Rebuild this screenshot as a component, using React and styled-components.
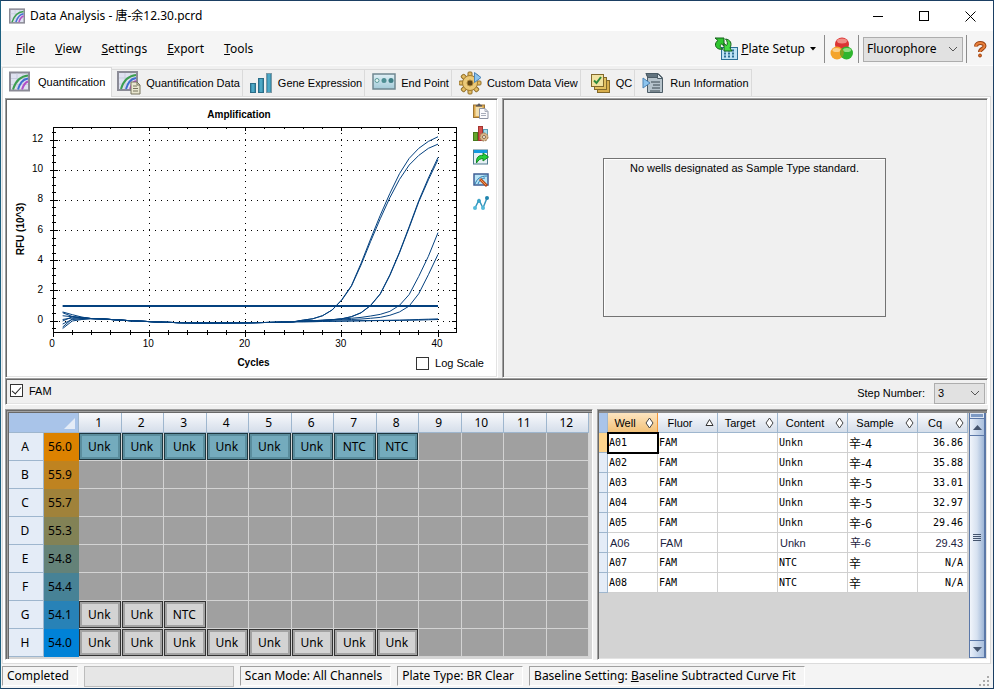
import React, { useState } from "react";
import styled, { createGlobalStyle, css } from "styled-components";

const UI = '"Noto Sans", "Noto Sans CJK SC", sans-serif';
const SMALL = '"Liberation Sans", "Noto Sans CJK SC", sans-serif';
const MONO = '"DejaVu Sans Mono", "Noto Sans CJK SC", monospace';

const GlobalStyle = createGlobalStyle`
  *, *::before, *::after { box-sizing: border-box; }
  body { margin: 0; background: #f0f0f0; color: #000; font: 12px/16px ${UI}; }
  button, select, input { font: inherit; color: inherit; margin: 0; }
  button { border: 0; padding: 0; background: none; }
  svg { display: block; flex: none; }
`;

/* ---------- window frame ---------- */

const Window = styled.div`
  display: flex;
  flex-direction: column;
  min-height: 100vh;
  background: #f0f0f0;
  border: 1px solid #1b3f63;
  border-left-color: #1d6080;
`;

const TitleBar = styled.header`
  display: flex;
  align-items: center;
  height: 30px;
  padding-left: 8px;
  background: #fff;
`;

const Title = styled.h1`
  flex: 1;
  margin: 0 0 0 5px;
  font-size: 12px;
  font-weight: 400;
`;

const WindowButton = styled.button`
  display: grid;
  place-items: center;
  width: 46px;
  height: 29px;
`;

const MenuBar = styled.nav`
  display: flex;
  align-items: center;
  height: 35px;
  padding: 2px 6px 0 5px;
  background: #f5f5f5;
  border-bottom: 1px solid #fbfbfb;
`;

const MenuItem = styled.button`
  padding: 0 10px;
`;

const Spacer = styled.div`
  flex: 1;
`;

const ToolButton = styled.button`
  display: flex;
  align-items: center;
  gap: ${(p) => p.$gap || 0}px;
`;

const Divider = styled.span`
  width: 1px;
  height: 28px;
  margin: 0 ${(p) => p.$after || 5}px 0 ${(p) => p.$before || 5}px;
  background: #8c8c8c;
`;

const SelectWrap = styled.span`
  display: inline-grid;
  grid-template-columns: 1fr 18px;
  align-items: center;
  width: ${(p) => p.$width}px;
  height: ${(p) => p.$height}px;
  border: 1px solid #adadad;
  background: #e1e1e1;
  font-family: ${(p) => (p.$small ? SMALL : UI)};
  font-size: ${(p) => (p.$small ? 11 : 12)}px;

  select {
    grid-area: 1 / 1 / 2 / 3;
    width: 100%;
    height: 100%;
    padding: 0 0 0 3px;
    border: 0;
    background: none;
    appearance: none;
  }
  svg {
    grid-area: 1 / 2;
    justify-self: center;
    pointer-events: none;
  }
`;

/* ---------- tabs ---------- */

const TabStrip = styled.div`
  display: flex;
  align-items: flex-end;
  height: 30px;
  padding-left: 1px;
  font: 11px/14px ${SMALL};
`;

const Tab = styled.button`
  display: flex;
  align-items: center;
  gap: 5px;
  height: 27px;
  padding: 0 2px 0 ${(p) => p.$lead}px;
  border: 1px solid #dadada;
  border-width: 1px 1px 0 0;
  background: #f0f0f0;
  white-space: nowrap;

  ${(p) =>
    p.$active &&
    css`
      z-index: 1;
      height: 30px;
      margin-bottom: -1px;
      padding: 0 6px 2px 6px;
      gap: 8px;
      background: #fff;
      border-left-width: 1px;
    `}
`;

const TabPage = styled.main`
  display: flex;
  flex: 1;
  flex-direction: column;
  margin: 0 2px 0 1px;
  padding: 1px 2px 3px;
  border: 1px solid #dcdcdc;
  background: #fff;
`;

const Workspace = styled.div`
  display: flex;
  flex: 1;
  flex-direction: column;
  background: #f0f0f0;
`;

const Split = styled.div`
  display: grid;
  grid-template-columns: ${(p) => p.$columns};
  gap: 4px;
  flex: 1 0 ${(p) => p.$height}px;
`;

const Panel = styled.section`
  min-width: 0;
  padding: 1px;
  border: 1px solid;
  border-color: #a0a0a0 #fff #fff #a0a0a0;
  box-shadow: inset 1px 1px #696969, inset -1px -1px #e3e3e3;
  background: ${(p) => p.$background || "#f0f0f0"};
`;

/* ---------- chart panel ---------- */

const ChartPanel = styled(Panel)`
  display: flex;
  flex-direction: column;
`;

const ChartBody = styled.div`
  display: flex;
  flex: 1;
  min-height: 0;

  > svg {
    flex: 1;
    min-width: 0;
    height: 100%;
  }
`;

const ChartTools = styled.div`
  display: flex;
  flex-direction: column;
  gap: 7px;
  width: 23px;
  padding-top: 3px;
`;

const ChartTool = styled.button`
  width: 16px;
  height: 16px;
`;

const ChartFooter = styled.div`
  display: grid;
  grid-template-columns: 1fr auto 1fr;
  align-items: center;
  height: 22px;
  padding: 0 12px 4px 16px;
  font: 11px/14px ${SMALL};
`;

const AxisTitle = styled.span`
  grid-column: 2;
  font-size: 10px;
  font-weight: 700;
`;

const CheckLabel = styled.label`
  display: flex;
  align-items: center;
  justify-self: end;
  gap: 6px;
  font: 11px/14px ${SMALL};
`;

const CheckBox = styled.input`
  appearance: none;
  display: grid;
  place-items: center;
  width: 13px;
  height: 13px;
  border: 1px solid #333;
  background: #fff;

  &:checked::after {
    content: "";
    width: 9px;
    height: 5px;
    margin-bottom: 3px;
    border: solid #222;
    border-width: 0 0 1px 1px;
    transform: rotate(-48deg);
  }
`;

const StandardPanel = styled(Panel)`
  display: grid;
  padding: 59px 101px 60px 100px;
`;

const EmptyBox = styled.p`
  margin: 0;
  padding: 2px;
  border: 1px solid #737373;
  box-shadow: inset 1px 1px #fff;
  text-align: center;
  font: 11px/14px ${SMALL};
`;

/* ---------- fluorophore bar ---------- */

const FluorBar = styled(Panel)`
  display: flex;
  align-items: center;
  height: 27px;
  margin-bottom: 4px;
  padding: 0 2px 2px 4px;
  font: 11px/14px ${SMALL};
`;

const StepLabel = styled.label`
  display: flex;
  align-items: center;
  gap: 9px;
  margin-left: auto;
  padding-top: 5px;
`;

/* ---------- plate ---------- */

const PlatePanel = styled(Panel)`
  padding: 3px 3px 2px 3px;
  background: #d6d6d6;
  box-shadow: inset 1px 1px #696969, inset 2px 2px #a0a0a0, inset 3px 3px #696969;
`;

const PlateTable = styled.table`
  width: 100%;
  height: 100%;
  table-layout: fixed;
  border-spacing: 0;
  text-align: center;
  line-height: 16px;
`;

const PlateHead = styled.th`
  height: 20px;
  padding: 0 2px 0 0;
  border-right: 1px solid #9eb6ce;
  border-bottom: 1px solid #9eb6ce;
  background: linear-gradient(#f8f9fc, #d5deea);
  font-weight: 400;
`;

const PlateCorner = styled(PlateHead)`
  padding: 0;
  background: #a9c4e9;

  svg {
    margin: 3px 3px 1px auto;
  }
`;

const RowHead = styled.th`
  padding: 0 2px 0 0;
  border-right: 1px solid #9eb6ce;
  border-bottom: 1px solid #9eb6ce;
  background: #e4ecf7;
  font-weight: 400;
`;

const TempCell = styled.td`
  padding: 0 3px 0 0;
  background: ${(p) => p.$color};
`;

const Well = styled.td`
  height: 27px;
  padding: 0 1px 0 0;
  border-right: 1px solid #d3d3d3;
  border-bottom: 1px solid #d3d3d3;
  background: #a0a0a0;

  ${(p) =>
    p.$kind === "loaded" &&
    css`
      background: #74abbd;
      box-shadow: inset 0 0 0 1px #1d3740, inset 0 0 0 3px #5b8e9e;
    `}
  ${(p) =>
    p.$kind === "idle" &&
    css`
      background: #d3d3d3;
      box-shadow: inset 0 0 0 1px #333, inset 0 0 0 3px #a3a3a3;
    `}
`;

/* ---------- results table ---------- */

const ResultsPanel = styled(Panel)`
  display: grid;
  grid-template-columns: minmax(0, 1fr) 17px;
  align-items: start;
  gap: 1px;
  padding-top: 3px;
  background: #d3d3d3;
  box-shadow: inset 1px 1px #696969, inset 0 3px #8a8a8a, inset -1px -1px #e3e3e3;
`;

const ResultsTable = styled.table`
  width: 100%;
  table-layout: fixed;
  border-spacing: 0;
`;

const ResultHead = styled.th`
  height: 20px;
  padding: 0;
  border-right: 1px solid #9eb6ce;
  border-bottom: 1px solid #9eb6ce;
  background: linear-gradient(#f8f9fc, #d5deea);
  font: 11px/14px ${SMALL};

  ${(p) =>
    p.$selected &&
    css`
      border-color: #f29536;
      background: linear-gradient(#fde5c0, #f3c27a);
    `}
  ${(p) =>
    p.$corner &&
    css`
      background: #a9c4e9;
    `}
`;

const SortButton = styled.button`
  display: flex;
  align-items: center;
  justify-content: space-between;
  width: 100%;
  padding: 0 3px 0 0;

  span {
    flex: 1;
    padding-right: 3px;
    text-align: center;
  }
`;

const RowMarker = styled.th`
  padding: 0;
  border-right: 1px solid #9eb6ce;
  border-bottom: 1px solid #9eb6ce;
  background: ${(p) => (p.$selected ? "#ffd58d" : "#e4ecf7")};
`;

const Cell = styled.td`
  height: 20px;
  padding: 0 4px 0 1px;
  border-right: 1px solid #d0d0d0;
  border-bottom: 1px solid #d0d0d0;
  background: #fff;
  font: 10px/14px ${MONO};
  text-align: ${(p) => (p.$right ? "right" : "left")};
  white-space: nowrap;

  ${(p) =>
    p.$cjk &&
    css`
      font: 12px/14px "Noto Sans CJK SC", sans-serif;
    `}
  ${(p) =>
    p.$current &&
    css`
      padding-left: 2px;
      color: #1c2340;
      font-family: ${SMALL};
      font-size: 11px;
    `}
  ${(p) =>
    p.$selected &&
    css`
      outline: 2px solid #000;
      outline-offset: -1px;
    `}
`;

const ScrollBar = styled.div`
  display: flex;
  flex-direction: column;
  align-self: stretch;
  border: solid #5b78a8;
  border-width: 0 2px 1px 1px;
  background: #5b78a8;
  gap: 1px;
`;

const ScrollSplit = styled.div`
  height: 5px;
  border: 1px solid #dce6f4;
  background: #7d9ac4;
`;

const ScrollButton = styled.button`
  display: grid;
  place-items: center;
  height: 16px;
  background: linear-gradient(90deg, #e9f0fa, #a9bfdd);
`;

const ScrollThumb = styled.div`
  display: grid;
  flex: 1;
  place-items: center;
  background: linear-gradient(90deg, #f1f5fb, #d6e1f0 50%, #9db5d6);
`;

/* ---------- status bar ---------- */

const StatusBar = styled.footer`
  display: flex;
  align-items: stretch;
  gap: 6px;
  height: 24px;
  padding: 2px 2px 1px 1px;
  background: #f4f4f4;
`;

const StatusCell = styled.div`
  padding: 1px 8px 0 4px;
  margin-bottom: 1px;
  border: 1px solid;
  border-color: #a0a0a0 #fff #fff #a0a0a0;
  white-space: nowrap;
`;

const ProgressTrack = styled.div`
  width: 150px;
  border: 1px solid #bcbcbc;
  background: #e6e6e6;
`;

const Grip = styled.svg`
  align-self: flex-end;
  margin-left: auto;
`;

/* ---------- icons ---------- */

const AmpShape = () => (
  <>
    <rect x="1" y="1" width="19" height="18" fill="#dfe2f0" stroke="#8b8b96" strokeWidth="2" />
    <path d="M2 7H19M2 13H19M8 2V18M14 2V18" stroke="#c9cde0" />
    <path d="M4 18C6 11 10 5 19 4" fill="none" stroke="#3c9e50" strokeWidth="2" />
    <path d="M9 18C11 12 13 8 19 7" fill="none" stroke="#3f6fd0" strokeWidth="2" />
    <path d="M13 18C14 15 16 11 19 10" fill="none" stroke="#b24fc8" strokeWidth="2" />
  </>
);

const AmpIcon = ({ size = 21 }) => (
  <svg width={size} height={size} viewBox="0 0 21 20" aria-hidden="true">
    <AmpShape />
  </svg>
);

const AmpDataIcon = () => (
  <svg width="24" height="24" viewBox="0 0 24 24" aria-hidden="true">
    <AmpShape />
    <path d="M14 11h6l3 3v9h-9z" fill="#e9e6cf" stroke="#77755f" />
    <path d="M20 11v3h3M16 15h4M16 17.5h5M16 20h5" fill="none" stroke="#77755f" />
  </svg>
);

const BarsIcon = () => (
  <svg width="23" height="22" viewBox="0 0 23 22" aria-hidden="true">
    <defs>
      <linearGradient id="bars" x2="1">
        <stop stopColor="#2d7fa3" />
        <stop offset=".5" stopColor="#56b3cf" />
        <stop offset="1" stopColor="#2c7896" />
      </linearGradient>
    </defs>
    <rect x=".5" y="11.5" width="5" height="9" fill="url(#bars)" stroke="#2a6d88" />
    <rect x="8.5" y="6.5" width="5" height="14" fill="url(#bars)" stroke="#2a6d88" />
    <rect x="16.5" y="1.5" width="5" height="19" fill="url(#bars)" stroke="#7c99a5" />
  </svg>
);

const EndPointIcon = () => (
  <svg width="24" height="20" viewBox="0 0 24 20" aria-hidden="true">
    <defs>
      <linearGradient id="ep" x2="0" y2="1">
        <stop stopColor="#dff0f6" />
        <stop offset="1" stopColor="#a3cad8" />
      </linearGradient>
    </defs>
    <rect x="1" y="1" width="22" height="15" fill="url(#ep)" stroke="#6f8790" strokeWidth="1.5" />
    <circle cx="5" cy="7.5" r="2" fill="#e4f5f5" stroke="#5c9a99" />
    <circle cx="12" cy="7.5" r="2.5" fill="#4f8f94" />
    <circle cx="19" cy="7.5" r="2.5" fill="#3f7f86" />
  </svg>
);

const teeth = [0, 45, 90, 135, 180, 225, 270, 315];
const GearIcon = () => (
  <svg width="23" height="24" viewBox="0 0 23 24" aria-hidden="true">
    {teeth.map((a) => (
      <rect key={a} x="9" y="1" width="4" height="6" rx="1" fill="#e3bb62" stroke="#8f6d27" transform={`rotate(${a} 11 12)`} />
    ))}
    <circle cx="11" cy="12" r="7.5" fill="#e7c16c" stroke="#a07c32" />
    <circle cx="11" cy="12" r="6.5" fill="#ebc978" />
    <circle cx="11" cy="12" r="3" fill="#5f4516" stroke="#b18a3d" />
    <path d="M15.5 1.5V11.5L22 6.5Z" fill="#8cc4ee" stroke="#4d84b5" />
  </svg>
);

const QcIcon = () => (
  <svg width="21" height="21" viewBox="0 0 21 21" aria-hidden="true">
    <rect x="7.5" y="7.5" width="12" height="12" fill="#d8ae4c" stroke="#82692b" />
    <rect x="4.5" y="4.5" width="12" height="12" fill="#e3c060" stroke="#82692b" />
    <rect x="1.5" y="1.5" width="12" height="12" fill="#f1e2a0" stroke="#82692b" />
    <path d="M4 7.5L6.5 10L11 4" fill="none" stroke="#2f8a3c" strokeWidth="2" />
  </svg>
);

const RunInfoIcon = () => (
  <svg width="23" height="22" viewBox="0 0 23 22" aria-hidden="true">
    <path d="M4 1.500H16L20.500 6V20.500H5.500V5Z" fill="#b6c3cb" stroke="#4c5c66" />
    <path d="M4 1.500H16L20 5.500H6Z" fill="#62747f" stroke="#4c5c66" />
    <path d="M15.500 1.500V6.500H20.500Z" fill="#dce5ea" stroke="#4c5c66" />
    <path d="M9 10H18M11 13H18M10 16H18M8 19H18" stroke="#38464e" />
    <path d="M1 6V16L8 11Z" fill="#8cc4ee" stroke="#4d84b5" />
  </svg>
);

const PlateSetupIcon = () => (
  <svg width="25" height="24" viewBox="0 0 25 24" aria-hidden="true">
    <rect x="7.5" y="10.5" width="16" height="12" fill="#bfe3f5" stroke="#2b6f96" />
    <path d="M10 13.5H22M10 16.5H22M10 19.5H22" stroke="#2b6f96" strokeWidth="2" strokeDasharray="2 2" />
    <path d="M1 1H10V9L7.500 7C5.500 8 6 11 9 12C5 13 1 11 1.500 7C2 5 3 4 4 3.500Z" fill="#30c630" stroke="#15611b" />
    <path d="M18 14H10V6.500L12.500 8.500C14 7 13.500 4 11.500 2C16 2.500 18.500 6 16 11Z" fill="#45d944" stroke="#15611b" />
  </svg>
);

const BallsIcon = () => (
  <svg width="24" height="24" viewBox="0 0 24 24" aria-hidden="true">
    <circle cx="12" cy="7.5" r="7" fill="#dc3434" />
    <ellipse cx="12" cy="4" rx="5" ry="2.5" fill="#f08e86" />
    <circle cx="7" cy="16" r="6.5" fill="#f4a42c" />
    <ellipse cx="6.5" cy="13" rx="4" ry="2" fill="#fad08a" />
    <circle cx="16.5" cy="16" r="6.5" fill="#2eb52e" />
    <ellipse cx="17" cy="13" rx="4" ry="2" fill="#93dd84" />
    <path d="M12 11.5A6.500 6.500 0 0 1 12 20.5A6.500 6.500 0 0 1 12 11.5Z" fill="#84a01e" />
  </svg>
);

const HelpIcon = () => (
  <svg width="13" height="17" viewBox="0 0 13 17" aria-hidden="true">
    <path d="M2 5.500C2 1 10.500 1 10.500 5C10.500 8 6 7.500 6 11" fill="none" stroke="#9a4313" strokeWidth="4" />
    <path d="M2 5.500C2 1 10.500 1 10.500 5C10.500 8 6 7.500 6 11" fill="none" stroke="#e9803c" strokeWidth="2" />
    <circle cx="6" cy="14.5" r="1.5" fill="#e06a20" stroke="#9a4313" />
  </svg>
);

const Chevron = () => (
  <svg width="10" height="6" viewBox="0 0 10 6" aria-hidden="true">
    <path d="M1 1L5 5L9 1" fill="none" stroke="#555" />
  </svg>
);

const Diamond = () => (
  <svg width="9" height="12" viewBox="0 0 9 12" aria-hidden="true">
    <path d="M4.500 1L8 6L4.500 11L1 6Z" fill="#fff" stroke="#444" />
  </svg>
);

const SortUp = () => (
  <svg width="9" height="9" viewBox="0 0 9 9" aria-hidden="true">
    <path d="M4.500 1.500L8 7.500H1Z" fill="#fff" stroke="#333" />
  </svg>
);

const PasteIcon = () => (
  <svg width="16" height="16" viewBox="0 0 16 16" aria-hidden="true">
    <rect x=".5" y="2" width="11" height="12.5" fill="#dca94f" stroke="#9a7436" />
    <rect x="2.5" y="4" width="7" height="9" fill="#f2dfae" />
    <path d="M3 3.500V2H4.500C5 0 7 0 7.500 2H9V3.500Z" fill="#5b5b60" />
    <path d="M6.500 5.500H12L15 8.500V15.500H6.500Z" fill="#fbfbfd" stroke="#8d93a3" />
    <path d="M12 5.500V8.500H15M8 10.500H13M8 12.500H13" fill="none" stroke="#a9aebb" />
  </svg>
);

const ChartSettingsIcon = () => (
  <svg width="16" height="16" viewBox="0 0 16 16" aria-hidden="true">
    <rect x=".5" y="6.5" width="4" height="8" fill="#65a62b" stroke="#467a1b" />
    <rect x="5.5" y=".5" width="4" height="14" fill="#d3514c" stroke="#a33430" />
    <rect x="10.5" y="3.5" width="4" height="7" fill="#a8dcec" stroke="#5b9db3" />
    <circle cx="11" cy="11" r="4" fill="#d9b78b" stroke="#9a7a52" strokeDasharray="2 1" />
    <circle cx="11" cy="11" r="1.5" fill="#fff" stroke="#8a6a44" />
  </svg>
);

const ExportIcon = () => (
  <svg width="16" height="16" viewBox="0 0 16 16" aria-hidden="true">
    <rect x=".5" y="1" width="14" height="14" fill="#e6eff4" stroke="#517b8e" />
    <rect x="1" y="1" width="13" height="3" fill="#139ae0" />
    <path d="M3.500 14C3 8 6 6 10 6.500V4L15.500 8L10 12V9.500C7 9.500 5.500 11 3.500 14Z" fill="#25cf3a" stroke="#128a22" />
  </svg>
);

const EditChartIcon = () => (
  <svg width="16" height="16" viewBox="0 0 16 16" aria-hidden="true">
    <rect x="1" y="2" width="14" height="11" fill="#b9e4f6" stroke="#3f5f95" strokeWidth="1.5" />
    <path d="M2 12C4 7 7 4 14 4M5 12C6 9 9 6 12 6" fill="none" stroke="#287cae" />
    <path d="M7 7L14 14" stroke="#b8491c" strokeWidth="3" />
    <path d="M7.500 7.500L13 13" stroke="#f49a4e" />
  </svg>
);

const TraceIcon = () => (
  <svg width="16" height="16" viewBox="0 0 16 16" aria-hidden="true">
    <path d="M2 13L6 5L10 13L14 3" fill="none" stroke="#3596bd" strokeWidth="1.5" />
    <circle cx="2" cy="13" r="2" fill="#55bada" />
    <circle cx="6" cy="6" r="2" fill="#3aa3c8" />
    <circle cx="10" cy="13" r="2" fill="#55bada" />
    <circle cx="14" cy="3" r="2" fill="#2185ae" />
  </svg>
);

/* ---------- amplification chart ---------- */

const PLOT = { left: 46, right: 449, top: 27, bottom: 232, zero: 221 };
const px = (cycle) => PLOT.left + cycle * 9.625;
const py = (rfu) => PLOT.zero - rfu * 15.08;

/* shared baseline RFU for cycles 4-25 */
const baseline = [
  0.16, 0.14, 0.1, 0.06, 0.02, -0.01, -0.04, -0.07, -0.09, -0.11, -0.12, -0.13,
  -0.13, -0.13, -0.13, -0.12, -0.12, -0.11, -0.1, -0.09, -0.07, -0.05,
];

/* start: cycles 1-3, tail: cycles 26-40 */
const traces = [
  { start: [0.6, 0.42, 0.26], tail: [0.06, 0.15, 0.35, 0.73, 1.41, 2.34, 3.82, 5.44, 7.01, 8.46, 9.77, 10.78, 11.45, 11.91, 12.22] },
  { start: [0.35, 0.28, 0.22], tail: [0.06, 0.15, 0.35, 0.73, 1.38, 2.3, 3.71, 5.28, 6.78, 8.18, 9.39, 10.34, 10.98, 11.45, 11.73] },
  { start: [0.1, 0.2, 0.22], tail: [0, 0.02, 0.05, 0.09, 0.15, 0.29, 0.55, 1.04, 1.81, 3.07, 4.57, 6.25, 7.98, 9.48, 10.85] },
  { start: [-0.2, 0.1, 0.16], tail: [0, 0.01, 0.04, 0.08, 0.14, 0.28, 0.54, 1.02, 1.78, 3.02, 4.52, 6.18, 7.9, 9.36, 10.7] },
  { start: [-0.5, 0, 0.1], tail: [0, 0.02, 0.05, 0.09, 0.13, 0.18, 0.24, 0.33, 0.44, 0.64, 1.04, 1.75, 2.96, 4.29, 5.86] },
  { start: [0, 0.28, 0.24], tail: [0, 0.01, 0.03, 0.05, 0.08, 0.1, 0.13, 0.18, 0.24, 0.38, 0.6, 0.99, 1.81, 3.07, 4.42] },
  { start: [0.55, 0.3, 0.18], tail: [-0.04, -0.03, -0.02, -0.01, 0, 0.01, 0.02, 0.03, 0.04, 0.05, 0.06, 0.08, 0.1, 0.12, 0.14] },
  { start: [-0.4, 0.15, 0.12], tail: [-0.06, -0.05, -0.03, -0.02, -0.01, 0, 0.01, 0.02, 0.03, 0.03, 0.04, 0.05, 0.06, 0.08, 0.1] },
];

const range = (from, to, step) => {
  const out = [];
  for (let v = from; v <= to; v += step) out.push(v);
  return out;
};

function AmplificationChart() {
  const { left, right, top, bottom } = PLOT;
  return (
    <svg viewBox="0 0 466 254" fontFamily="Liberation Sans, sans-serif" fontSize="10" role="img" aria-label="Amplification">
      <text x="232" y="18" textAnchor="middle" fontWeight="700">Amplification</text>
      <text transform="translate(17 129) rotate(-90)" textAnchor="middle" fontWeight="700">RFU (10^3)</text>
      <g stroke="#000" shapeRendering="crispEdges">
        {range(0, 12, 2).map((v) => (
          <line key={v} x1={left} x2={right} y1={py(v)} y2={py(v)} strokeDasharray="1 5" />
        ))}
        {range(10, 40, 10).map((c) => (
          <line key={c} x1={px(c)} x2={px(c)} y1={top} y2={bottom} strokeDasharray="1 5" />
        ))}
        <rect x={left} y={top} width={right - left} height={bottom - top} fill="none" />
        {range(0, 40, 2).map((c) => {
          const major = c % 10 === 0;
          return (
            <path key={c} d={`M${px(c)} ${bottom - 2}V${bottom + (major ? 5 : 3)}M${px(c)} ${top}V${top + (major ? 4 : 2)}`} />
          );
        })}
        {range(-1, 25, 1).map((i) => {
          const major = i % 4 === 0;
          const y = py(i / 2);
          return <path key={i} d={`M${left - (major ? 3 : 1)} ${y}H${left + (major ? 5 : 3)}M${right} ${y}H${right - (major ? 4 : 2)}`} />;
        })}
      </g>
      {range(0, 12, 2).map((v) => (
        <text key={v} x="36" y={py(v) + 2} textAnchor="end">{v}</text>
      ))}
      {range(0, 40, 10).map((c) => (
        <text key={c} x={px(c) - 1} y="247" textAnchor="middle">{c}</text>
      ))}
      <g fill="none" stroke="#04417f">
        <line x1={px(1)} x2={px(40)} y1="206" y2="206" strokeWidth="2" />
        {traces.map((t, i) => (
          <polyline
            key={i}
            points={[...t.start, ...baseline, ...t.tail].map((v, c) => `${px(c + 1)},${py(v)}`).join(" ")}
          />
        ))}
      </g>
    </svg>
  );
}

/* ---------- data ---------- */

const menus = ["File", "View", "Settings", "Export", "Tools"];

const tabs = [
  { label: "Quantification", icon: <AmpIcon />, lead: 7 },
  { label: "Quantification Data", icon: <AmpDataIcon />, lead: 5 },
  { label: "Gene Expression", icon: <BarsIcon />, lead: 7 },
  { label: "End Point", icon: <EndPointIcon />, lead: 7 },
  { label: "Custom Data View", icon: <GearIcon />, lead: 7 },
  { label: "QC", icon: <QcIcon />, lead: 9 },
  { label: "Run Information", icon: <RunInfoIcon />, lead: 7 },
];

const chartTools = [
  ["Copy", PasteIcon],
  ["Chart settings", ChartSettingsIcon],
  ["Export", ExportIcon],
  ["Edit chart", EditChartIcon],
  ["Trace styles", TraceIcon],
];

const U = "Unk";
const N = "NTC";
const plateRows = [
  { row: "A", temp: "56.0", color: "#dc8200", kind: "loaded", wells: [U, U, U, U, U, U, N, N] },
  { row: "B", temp: "55.9", color: "#bf8320", wells: [] },
  { row: "C", temp: "55.7", color: "#a0823a", wells: [] },
  { row: "D", temp: "55.3", color: "#828256", wells: [] },
  { row: "E", temp: "54.8", color: "#648278", wells: [] },
  { row: "F", temp: "54.4", color: "#478296", wells: [] },
  { row: "G", temp: "54.1", color: "#2882b7", kind: "idle", wells: [U, U, N] },
  { row: "H", temp: "54.0", color: "#0082d7", kind: "idle", wells: [U, U, U, U, U, U, U, U] },
];

const columns = [
  { label: "Well", width: 50 },
  { label: "Fluor", width: 60 },
  { label: "Target", width: 60 },
  { label: "Content", width: 70 },
  { label: "Sample", width: 70 },
  { label: "Cq", width: 50 },
];

const results = [
  ["A01", "FAM", "", "Unkn", "辛-4", "36.86"],
  ["A02", "FAM", "", "Unkn", "辛-4", "35.88"],
  ["A03", "FAM", "", "Unkn", "辛-5", "33.01"],
  ["A04", "FAM", "", "Unkn", "辛-5", "32.97"],
  ["A05", "FAM", "", "Unkn", "辛-6", "29.46"],
  ["A06", "FAM", "", "Unkn", "辛-6", "29.43"],
  ["A07", "FAM", "", "NTC", "辛", "N/A"],
  ["A08", "FAM", "", "NTC", "辛", "N/A"],
];

/* ---------- sections ---------- */

const Mnemonic = ({ text }) => (
  <span>
    <u>{text[0]}</u>
    {text.slice(1)}
  </span>
);

function Plate() {
  return (
    <PlatePanel aria-label="Plate">
      <PlateTable>
        <colgroup>
          <col width="35" />
          <col width="35" />
          {range(1, 12, 1).map((n) => <col key={n} />)}
        </colgroup>
        <thead>
          <tr>
            <PlateCorner colSpan={2}>
              <svg width="11" height="11" viewBox="0 0 11 11" aria-hidden="true">
                <path d="M11 0V11H0Z" fill="#e4ecf7" />
              </svg>
            </PlateCorner>
            {range(1, 12, 1).map((n) => <PlateHead key={n}>{n}</PlateHead>)}
          </tr>
        </thead>
        <tbody>
          {plateRows.map((r) => (
            <tr key={r.row}>
              <RowHead>{r.row}</RowHead>
              <TempCell $color={r.color}>{r.temp}</TempCell>
              {range(0, 11, 1).map((i) => (
                <Well key={i} $kind={r.wells[i] && r.kind}>{r.wells[i]}</Well>
              ))}
            </tr>
          ))}
        </tbody>
      </PlateTable>
    </PlatePanel>
  );
}

function Results() {
  return (
    <ResultsPanel aria-label="Results">
      <ResultsTable>
        <colgroup>
          <col width="9" />
          {columns.map((c) => <col key={c.label} width={c.width} />)}
        </colgroup>
        <thead>
          <tr>
            <ResultHead $corner />
            {columns.map((c, i) => (
              <ResultHead key={c.label} $selected={i === 0}>
                <SortButton>
                  <span>{c.label}</span>
                  {c.label === "Fluor" ? <SortUp /> : <Diamond />}
                </SortButton>
              </ResultHead>
            ))}
          </tr>
        </thead>
        <tbody>
          {results.map((r, y) => (
            <tr key={r[0]}>
              <RowMarker $selected={y === 0} />
              {r.map((value, x) => (
                <Cell key={x} $right={x === 5} $cjk={x === 4} $current={y === 5} $selected={y === 0 && x === 0}>
                  {value}
                </Cell>
              ))}
            </tr>
          ))}
        </tbody>
      </ResultsTable>
      <ScrollBar>
        <ScrollSplit />
        <ScrollButton aria-label="Scroll up">
          <svg width="9" height="5" viewBox="0 0 9 5"><path d="M0 5L4.500 0L9 5Z" fill="#44546e" /></svg>
        </ScrollButton>
        <ScrollThumb>
          <svg width="8" height="8" viewBox="0 0 8 8"><path d="M0 .5H8M0 2.500H8M0 4.500H8M0 6.500H8" stroke="#44546e" /></svg>
        </ScrollThumb>
        <ScrollButton aria-label="Scroll down">
          <svg width="9" height="5" viewBox="0 0 9 5"><path d="M0 0L4.500 5L9 0Z" fill="#44546e" /></svg>
        </ScrollButton>
      </ScrollBar>
    </ResultsPanel>
  );
}

export default function App() {
  const [active, setActive] = useState(0);
  return (
    <Window>
      <GlobalStyle />
      <TitleBar>
        <AmpIcon size={16} />
        <Title>Data Analysis - 唐-余12.30.pcrd</Title>
        <WindowButton aria-label="Minimize">
          <svg width="11" height="11"><path d="M0 5.500H10" stroke="#000" /></svg>
        </WindowButton>
        <WindowButton aria-label="Maximize">
          <svg width="11" height="11"><rect x=".5" y=".5" width="9" height="9" fill="none" stroke="#000" /></svg>
        </WindowButton>
        <WindowButton aria-label="Close">
          <svg width="11" height="11"><path d="M.5 .5L10.500 10.500M10.500 .5L.5 10.500" stroke="#000" /></svg>
        </WindowButton>
      </TitleBar>

      <MenuBar>
        {menus.map((m) => <MenuItem key={m}><Mnemonic text={m} /></MenuItem>)}
        <Spacer />
        <ToolButton $gap={2}>
          <PlateSetupIcon />
          <Mnemonic text="Plate Setup" />
          <svg width="12" height="4" viewBox="0 0 12 4"><path d="M3 0H9L6 3.500Z" /></svg>
        </ToolButton>
        <Divider />
        <ToolButton aria-label="Fluorophores"><BallsIcon /></ToolButton>
        <Divider $before={4} $after={4} />
        <SelectWrap $width={100} $height={25}>
          <select aria-label="View by"><option>Fluorophore</option></select>
          <Chevron />
        </SelectWrap>
        <Divider $before={3} $after={7} />
        <ToolButton aria-label="Help"><HelpIcon /></ToolButton>
      </MenuBar>

      <TabStrip role="tablist">
        {tabs.map((t, i) => (
          <Tab key={t.label} role="tab" aria-selected={i === active} $active={i === active} $lead={t.lead} onClick={() => setActive(i)}>
            {t.icon}
            {t.label}
          </Tab>
        ))}
      </TabStrip>

      <TabPage>
        <Workspace>
          <Split $columns="493fr 486fr" $height={280}>
            <ChartPanel $background="#fff">
              <ChartBody>
                <AmplificationChart />
                <ChartTools>
                  {chartTools.map(([label, Icon]) => (
                    <ChartTool key={label} aria-label={label}><Icon /></ChartTool>
                  ))}
                </ChartTools>
              </ChartBody>
              <ChartFooter>
                <AxisTitle>Cycles</AxisTitle>
                <CheckLabel><CheckBox type="checkbox" />Log Scale</CheckLabel>
              </ChartFooter>
            </ChartPanel>
            <StandardPanel>
              <EmptyBox>No wells designated as Sample Type standard.</EmptyBox>
            </StandardPanel>
          </Split>

          <FluorBar>
            <CheckLabel><CheckBox type="checkbox" defaultChecked />FAM</CheckLabel>
            <StepLabel>
              Step Number:
              <SelectWrap $width={51} $height={21} $small>
                <select><option>3</option></select>
                <Chevron />
              </SelectWrap>
            </StepLabel>
          </FluorBar>

          <Split $columns="588fr 391fr" $height={251}>
            <Plate />
            <Results />
          </Split>
        </Workspace>
      </TabPage>

      <StatusBar>
        <StatusCell>Completed</StatusCell>
        <ProgressTrack role="progressbar" aria-label="Progress" />
        <StatusCell>Scan Mode: All Channels</StatusCell>
        <StatusCell>Plate Type: BR Clear</StatusCell>
        <StatusCell>Baseline Setting: <u>B</u>aseline Subtracted Curve Fit</StatusCell>
        <Grip width="12" height="12" viewBox="0 0 12 12" aria-hidden="true">
          <path d="M8 1h2v2h-2zM8 5h2v2h-2zM4 5h2v2h-2zM8 9h2v2h-2zM4 9h2v2h-2zM0 9h2v2h-2z" fill="#ababab" />
        </Grip>
      </StatusBar>
    </Window>
  );
}
